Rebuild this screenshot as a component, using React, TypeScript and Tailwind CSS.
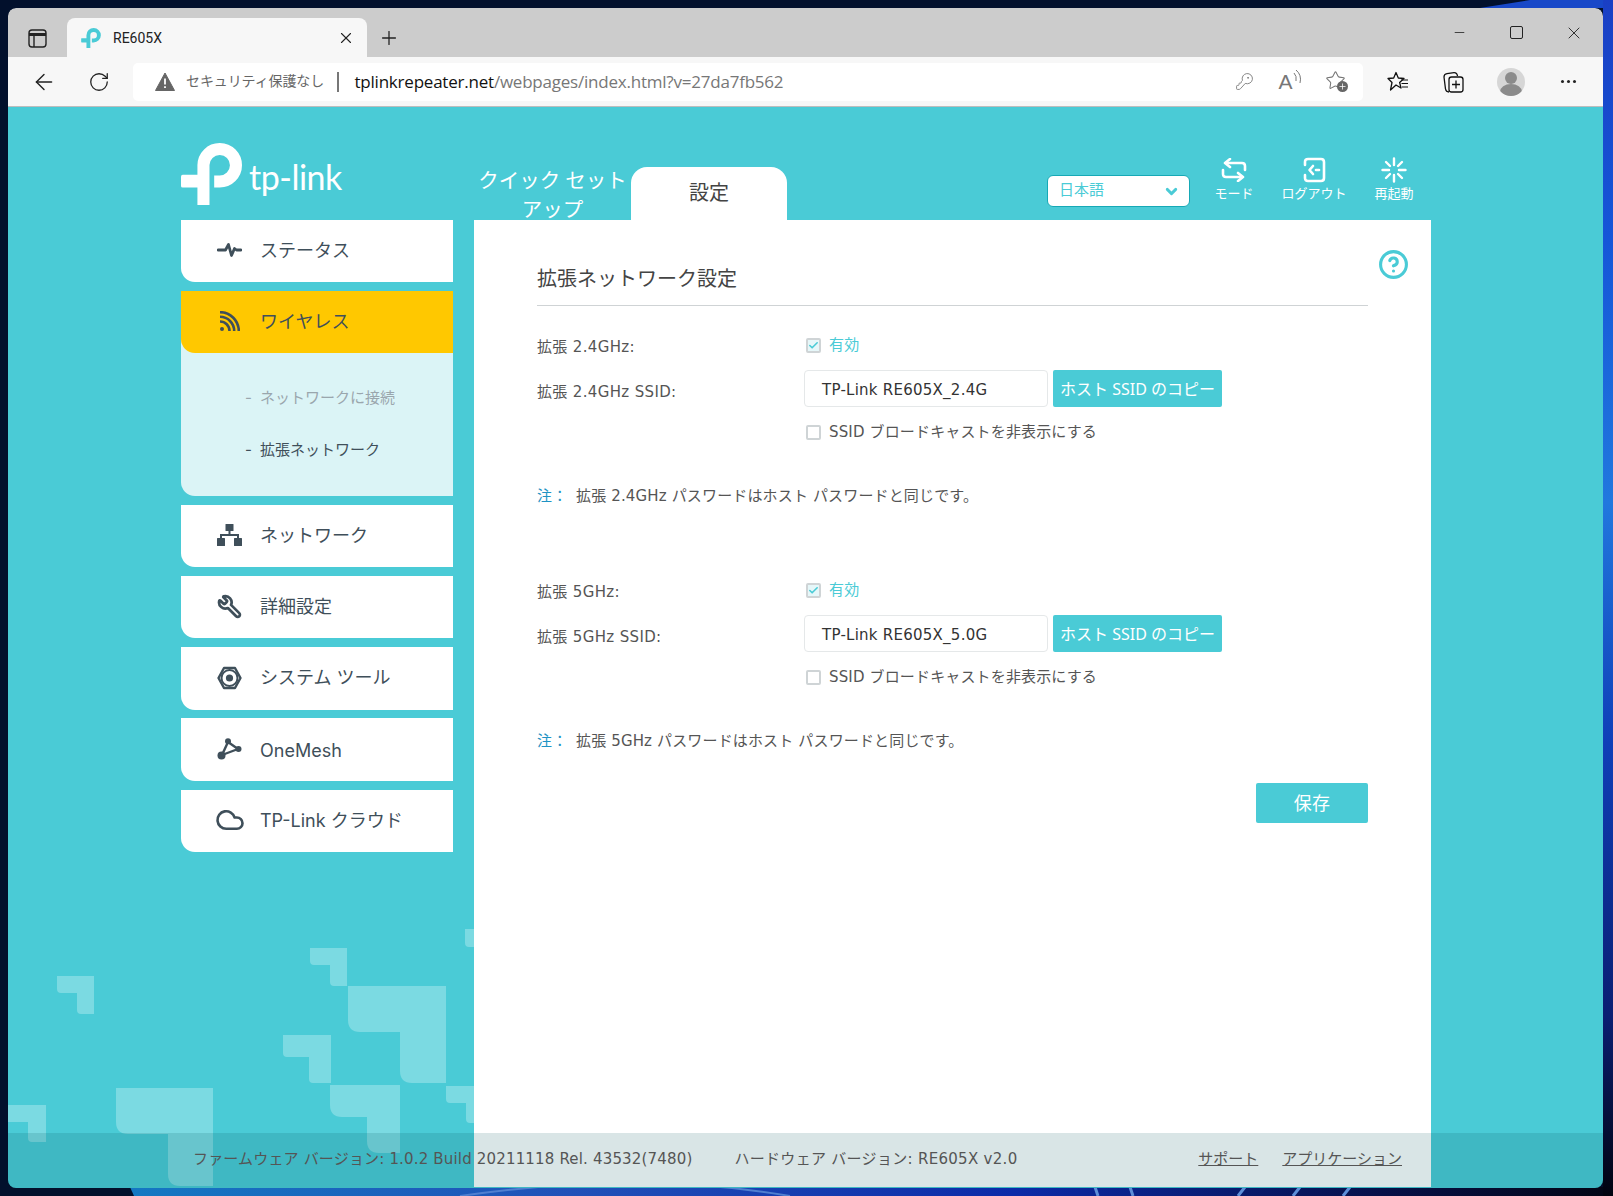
import React from "react";
import { CircleHelp, Check, Wrench, Cloud, KeyRound, Star, ArrowLeft, RotateCw, X, Plus, Minus, ChevronDown } from "lucide-react";

const ink = "#3f4f5a";

function Wallpaper() {
  return (
    <svg className="absolute inset-0" width="1613" height="1196" viewBox="0 0 1613 1196">
      <defs>
        <linearGradient id="wr" x1="0" y1="0" x2="0" y2="1">
          <stop offset="0" stopColor="#1a3fc4" />
          <stop offset="0.2" stopColor="#1556d8" />
          <stop offset="0.42" stopColor="#2178de" />
          <stop offset="0.62" stopColor="#0f3fb8" />
          <stop offset="0.85" stopColor="#0a1f72" />
          <stop offset="1" stopColor="#01030f" />
        </linearGradient>
        <linearGradient id="wb" x1="0" y1="0" x2="1" y2="0">
          <stop offset="0" stopColor="#1478c2" />
          <stop offset="0.3" stopColor="#2050b8" />
          <stop offset="0.6" stopColor="#0b2aa8" />
          <stop offset="0.85" stopColor="#061048" />
          <stop offset="1" stopColor="#020616" />
        </linearGradient>
      </defs>
      <rect width="1613" height="1196" fill="#02102c" />
      <path d="M1480 8 L1530 0 H1613 V8 Z" fill="#1848c8" />
      <rect x="1603" y="0" width="10" height="1196" fill="url(#wr)" />
      <path d="M130 1187 H1603 V1196 H134 Z" fill="url(#wb)" />
      <path d="M460 1196 Q640 1170 790 1196" fill="none" stroke="#4f7fd0" strokeWidth="2" />
      <path d="M1095 1187 L1098 1196 M1130 1187 L1133 1196 M1245 1187 L1238 1196 M1300 1187 L1293 1196 M1350 1187 L1343 1196" stroke="#5d8ed8" strokeWidth="3" />
    </svg>
  );
}

function Decor() {
  const c = "#7bdae2";
  const shapes: [number, number, number, number, number, number][] = [
    [57, 976, 94, 1014, 77, 993],
    [310, 948, 347, 986, 330, 965],
    [348, 986, 446, 1083, 400, 1032],
    [283, 1035, 331, 1083, 309, 1057],
    [330, 1085, 400, 1153, 367, 1117],
    [116, 1088, 213, 1186, 168, 1134],
    [-2, 1105, 46, 1142, 28, 1122],
    [446, 1086, 490, 1123, 466, 1103],
    [465, 929, 490, 947, 480, 947],
  ];
  return (
    <svg className="absolute left-0 top-0" width="1595" height="1080" viewBox="8 107 1595 1080">
      {shapes.map(([x1, y1, x2, y2, ix, iy], i) => {
        const r = (x2 - x1) > 60 ? 12 : 4;
        return (
          <path
            key={i}
            fill={c}
            d={`M${x1} ${y1} H${x2} V${y2} H${ix + r} Q${ix} ${y2} ${ix} ${y2 - r} V${iy} H${x1 + r} Q${x1} ${iy} ${x1} ${iy - r} Z`}
          />
        );
      })}
    </svg>
  );
}

function TpMark({ color, w, h }: { color: string; w: number; h: number }) {
  return (
    <svg width={w} height={h} viewBox="33 25 182 185" className="shrink-0">
      <path d="M100 210 V91 A48.5 48.5 0 1 1 148.5 140 H132" fill="none" stroke={color} strokeWidth="36" />
      <path d="M100 120 H38 Q33 120 33 125 V153 Q33 158 38 158 H100 Z" fill={color} />
    </svg>
  );
}

function TabStrip() {
  return (
    <div className="flex h-[49px] items-end bg-[#cccccc] rounded-t-[8px]">
      <div className="flex h-full w-[59px] items-center justify-center pt-[12px]">
        <svg width="19" height="19" viewBox="0 0 19 19" fill="none" stroke="#222" strokeWidth="1.4">
          <rect x="1" y="1" width="17" height="17" rx="3" />
          <path d="M1 5.5 H18" strokeWidth="3.2" />
          <path d="M6 5 V18" />
        </svg>
      </div>
      <div className="flex h-[39px] w-[300px] items-center rounded-t-[8px] bg-[#f7f7f7] pl-[14px] pr-[12px]">
        <TpMark color="#4acbd6" w={20} h={20} />
        <span className="ml-[12px] pt-[1px] text-[14px] text-[#222]">RE605X</span>
        <X size={18} strokeWidth={1.5} className="ml-auto text-[#222]" />
      </div>
      <div className="flex h-[39px] w-[44px] items-center justify-center">
        <Plus size={22} strokeWidth={1.4} className="text-[#222]" />
      </div>
      <div className="ml-auto flex h-full items-center">
        <div className="flex w-[57px] justify-center pl-[2px]"><Minus size={15} strokeWidth={1.3} className="text-[#222]" /></div>
        <div className="flex w-[58px] justify-center">
          <div className="h-[13px] w-[13px] rounded-[2px] border border-[#222]" />
        </div>
        <div className="flex w-[58px] justify-center"><X size={20} strokeWidth={1.1} className="text-[#222]" /></div>
      </div>
    </div>
  );
}

function Toolbar() {
  return (
    <div className="flex h-[50px] items-center border-b border-[#bdbdbd] bg-[#f7f7f7] pl-[8px]">
      <div className="flex w-[55px] justify-center"><ArrowLeft size={26} strokeWidth={1.3} className="text-[#222]" /></div>
      <div className="flex w-[55px] justify-center"><RotateCw size={22} strokeWidth={1.4} className="text-[#222]" /></div>
      <div className="ml-[7px] flex h-[38px] w-[1230px] items-center rounded-[5px] bg-white pl-[22px] pr-[5px]">
        <svg width="20" height="19" viewBox="0 0 20 19">
          <path d="M10 1 L19.5 18.5 H0.5 Z" fill="#666" stroke="#666" strokeLinejoin="round" />
          <path d="M10 6.5 V12.5 M10 14.2 V16" stroke="#fff" strokeWidth="1.8" />
        </svg>
        <span className="ml-[11px] w-[137px] whitespace-nowrap text-[14px] tracking-[-0.1px] text-[#666]">セキュリティ保護なし</span>
        <div className="ml-[14px] h-[20px] w-[1.5px] bg-[#777]" />
        <span className="ml-[16px] whitespace-nowrap font-['Open_Sans',sans-serif] text-[17px] tracking-[-0.22px] text-[#111]">
          tplinkrepeater.net<span className="text-[#777]">/webpages/index.html?v=27da7fb562</span>
        </span>
        <div className="ml-auto flex items-center text-[#777]">
          <div className="flex w-[45px] justify-center"><KeyRound size={19} strokeWidth={1.1} className="-scale-x-100 rotate-90" /></div>
          <div className="flex w-[46px] items-center justify-center">
            <span className="font-['Liberation_Sans',sans-serif] text-[21px] leading-none">A</span>
            <svg width="9" height="15" viewBox="0 0 9 15" fill="none" stroke="#777" className="-mt-[9px]"><path d="M1 3 Q4 6 3 11 M3 0 Q9 5 7 13" /></svg>
          </div>
          <div className="relative flex w-[45px] justify-center">
            <Star size={21} strokeWidth={1.2} className="-mt-[2px]" />
            <div className="absolute left-[24px] top-[9px] flex h-[11px] w-[11px] items-center justify-center rounded-full bg-[#666]"><Plus size={9} strokeWidth={2} className="text-white" /></div>
          </div>
        </div>
      </div>
      <div className="ml-[7px] flex w-[56px] justify-center">
        <svg width="22" height="21" viewBox="0 0 22 21" fill="none" stroke="#111" strokeWidth="1.3" strokeLinejoin="round">
          <path d="M9 1.5 L11.3 7 L17 7.5 L12.6 11.4 L14 17 L9 14 L3.5 19 L5 11.5 L1 7.5 L6.7 7 Z" />
          <path d="M14 9 H21 M14.5 12.5 H21 M15 16 H21" strokeWidth="1.2" />
        </svg>
      </div>
      <div className="flex w-[54px] justify-center">
        <svg width="21" height="22" viewBox="0 0 21 22" fill="none" stroke="#111" strokeWidth="1.3">
          <path d="M6 21 Q3 21 2.5 18 L1 6 Q1 3 4 2.6 L11 1.6 Q14 1.5 14.5 5" />
          <rect x="6" y="6" width="14" height="15" rx="2.5" fill="#f7f7f7" />
          <path d="M13 9.5 V17.5 M9 13.5 H17" />
        </svg>
      </div>
      <div className="flex w-[61px] justify-center">
        <svg width="28" height="28" viewBox="0 0 28 28">
          <defs><clipPath id="av"><circle cx="14" cy="14" r="14" /></clipPath></defs>
          <circle cx="14" cy="14" r="14" fill="#d6d6d6" />
          <g clipPath="url(#av)" fill="#8b8b8b">
            <circle cx="14" cy="10" r="6" />
            <ellipse cx="14" cy="24" rx="11" ry="8" />
          </g>
        </svg>
      </div>
      <div className="flex w-[54px] justify-center gap-[3px]">
        <span className="h-[3px] w-[3px] rounded-full bg-[#222]" />
        <span className="h-[3px] w-[3px] rounded-full bg-[#222]" />
        <span className="h-[3px] w-[3px] rounded-full bg-[#222]" />
      </div>
    </div>
  );
}

function TopAction({ label, children }: { label: string; children: React.ReactNode }) {
  return (
    <div className="flex w-[80px] flex-col items-center pt-[50px] text-white">
      <div className="flex h-[26px] items-center justify-center">{children}</div>
      <span className="mt-[1px] whitespace-nowrap text-[13px] leading-[20px]">{label}</span>
    </div>
  );
}

function Header() {
  return (
    <div className="flex h-[113px] items-start">
      <div className="flex w-[293px] items-center pt-[36px]">
        <TpMark color="#fff" w={61} h={62} />
        <span className="ml-[7px] mt-[5px] font-['Lato',sans-serif] text-[34px] leading-none tracking-[-0.5px] text-white">tp-link</span>
      </div>
      <div className="h-[113px] w-[157px] pt-[60px] text-center text-[20.5px] leading-[29px] text-white">
        <span className="block whitespace-nowrap">クイック セット</span>
        アップ
      </div>
      <div className="mt-[60px] flex h-[53px] w-[156px] items-center justify-center rounded-t-[16px] bg-white pb-[2px] text-[20px] text-[#444]">
        設定
      </div>
      <div className="ml-auto -mr-[3px] flex">
        <div className="mr-[4px] mt-[68px] flex h-[32px] w-[143px] items-center rounded-[6px] border border-[#16a9b6] bg-white pb-[1px] pl-[11px] pr-[9px] text-[15px] text-[#4acbd6]">
          日本語
          <ChevronDown size={17} strokeWidth={4} className="ml-auto mt-[2px] text-[#4acbd6]" />
        </div>
        <TopAction label="モード">
          <svg width="26" height="24" viewBox="0 0 26 24" fill="none" stroke="#fff" strokeWidth="2.6" strokeLinecap="round" strokeLinejoin="round">
            <path d="M7 5 H21 Q24 5 24 8 V12" />
            <path d="M9 1 L4 5 L9 9" />
            <path d="M19 19 H5 Q2 19 2 16 V12" />
            <path d="M17 15 L22 19 L17 23" />
          </svg>
        </TopAction>
        <TopAction label="ログアウト">
          <svg width="23" height="26" viewBox="0 0 23 26" fill="none" stroke="#fff" strokeWidth="2.6" strokeLinecap="round" strokeLinejoin="round">
            <path d="M2 8 V5 Q2 2 5 2 H18 Q21 2 21 5 V21 Q21 24 18 24 H5 Q2 24 2 21 V18" />
            <path d="M10 9 L6.5 13 L10 17" />
            <path d="M13 13 H16" />
          </svg>
        </TopAction>
        <TopAction label="再起動">
          <svg width="26" height="26" viewBox="0 0 26 26" fill="none" stroke="#fff" strokeWidth="2.4" strokeLinecap="round">
            <path d="M13 1.5 V8 M13 18 V24.5 M1.5 13 H8 M18 13 H24.5 M5 5 L9 9 M17 17 L21 21 M21 5 L17 9 M9 17 L5 21" />
          </svg>
        </TopAction>
      </div>
    </div>
  );
}

function NavRow({ icon, label, cls, textCls }: { icon: React.ReactNode; label: string; cls: string; textCls?: string }) {
  return (
    <div className={`flex items-center pb-[2px] pl-[36px] ${cls}`}>
      <div className="flex h-[26px] w-[25px] items-center justify-center">{icon}</div>
      <span className={`ml-[18px] whitespace-nowrap text-[18px] text-[#3f4f5a] ${textCls ?? ""}`}>{label}</span>
    </div>
  );
}

function Sidebar() {
  return (
    <div className="flex w-[272px] flex-col gap-[9px] font-['Inter','Noto_Sans_CJK_JP',sans-serif]">
      <NavRow
        cls="h-[62px] rounded-bl-[14px] bg-white"
        label="ステータス"
        icon={
          <svg width="25" height="16" viewBox="0 0 25 16" fill="none" stroke={ink} strokeWidth="2.8" strokeLinejoin="round" strokeLinecap="round">
            <path d="M1 8 H8.5 L11.5 2.5 L14.5 13.5 L17.5 6.5 L19.5 8 H24" />
          </svg>
        }
      />
      <div className="flex flex-col rounded-bl-[14px] bg-[#dbf4f6]">
        <NavRow
          cls="h-[62px] rounded-bl-[14px] bg-[#ffc800]"
          label="ワイヤレス"
          icon={
            <svg width="20" height="20" viewBox="0 0 20 20" fill="none" stroke={ink} strokeWidth="2.6">
              <circle cx="2" cy="18" r="2" fill={ink} stroke="none" />
              <path d="M0 10.5 A9.5 9.5 0 0 1 9.5 20" />
              <path d="M0 5.8 A14.2 14.2 0 0 1 14.2 20" />
              <path d="M0 1.2 A18.8 18.8 0 0 1 18.8 20" />
            </svg>
          }
        />
        <div className="flex h-[143px] flex-col pt-[20px] pl-[64px] text-[15px]">
          <div className="flex h-[51px] items-center text-[#9aa6ad]">
            <span className="w-[15px]">-</span>ネットワークに接続
          </div>
          <div className="flex h-[53px] items-center text-[#3f4f5a]">
            <span className="w-[15px]">-</span>拡張ネットワーク
          </div>
        </div>
      </div>
      <NavRow
        cls="h-[62px] rounded-bl-[14px] bg-white"
        label="ネットワーク"
        icon={
          <svg width="25" height="22" viewBox="0 0 25 22">
            <path d="M12.5 6 V11 M4 16 V11 H21 V16" fill="none" stroke={ink} strokeWidth="2" />
            <rect x="8.5" y="0" width="8" height="7" rx="0.5" fill={ink} />
            <rect x="0" y="14" width="8" height="8" rx="0.5" fill={ink} />
            <rect x="17" y="14" width="8" height="8" rx="0.5" fill={ink} />
          </svg>
        }
      />
      <NavRow
        cls="h-[62px] rounded-bl-[14px] bg-white"
        label="詳細設定"
        icon={<Wrench size={27} strokeWidth={2.6} className="-scale-x-100" style={{ color: ink }} />}
      />
      <NavRow
        cls="-mb-[1px] h-[63px] rounded-bl-[14px] bg-white"
        label="システム ツール"
        icon={
          <svg width="25" height="24" viewBox="0 0 25 24" fill="none" stroke={ink} strokeLinejoin="round">
            <path d="M7 2 H18 L23.5 12 L18 22 H7 L1.5 12 Z" strokeWidth="2.4" />
            <circle cx="12.5" cy="12" r="8" strokeWidth="2" />
            <circle cx="12.5" cy="12" r="3.6" fill={ink} stroke="none" />
          </svg>
        }
      />
      <NavRow
        cls="h-[63px] rounded-bl-[14px] bg-white"
        label="OneMesh"
        textCls="pt-[4px]"
        icon={
          <svg width="25" height="22" viewBox="0 0 25 22" fill={ink} stroke={ink}>
            <path d="M11 4 L5 17 L21 11 Z" fill="none" strokeWidth="2.4" strokeLinejoin="round" />
            <circle cx="11" cy="3.2" r="3" stroke="none" />
            <circle cx="21.5" cy="11" r="3" stroke="none" />
            <circle cx="4.5" cy="17.5" r="4" stroke="none" />
          </svg>
        }
      />
      <NavRow
        cls="h-[62px] rounded-bl-[14px] bg-white"
        label="TP-Link クラウド"
        icon={<Cloud size={30} strokeWidth={2.1} className="-mt-[1px] shrink-0" style={{ color: ink }} />}
      />
    </div>
  );
}

function Box({ checked }: { checked?: boolean }) {
  return (
    <div className={`flex h-[15px] w-[15px] items-center justify-center rounded-[2px] border-2 border-[#cfd4d6] ${checked ? "bg-[#e6f7f9]" : "bg-white"}`}>
      {checked && <Check size={11} strokeWidth={3.5} className="text-[#4acbd6]" />}
    </div>
  );
}

function Band({ band, ssid, first }: { band: string; ssid: string; first?: boolean }) {
  return (
    <div className={first ? "mt-[28px]" : "mt-[72px]"}>
      <div className="flex h-[24px] items-center">
        <span className="w-[267px] pt-[2px] tracking-[0.35px]">拡張 {band}:</span>
        <div className="ml-[2px] -mt-[1px] flex items-center">
          <Box checked />
          <span className="ml-[8px] text-[#4acbd6]">有効</span>
        </div>
      </div>
      <div className="mt-[12px] flex h-[37px] items-center">
        <span className="w-[267px] pt-[8px] tracking-[0.35px]">拡張 {band} SSID:</span>
        <div className="flex h-[37px] w-[244px] items-center rounded-[4px] border border-[#e5e8e9] pl-[17px] pt-[3px] text-[15px] tracking-[0.25px] text-[#333]">{ssid}</div>
        <div className="ml-[5px] flex h-[37px] w-[169px] items-center justify-center whitespace-nowrap rounded-[2px] bg-[#4acbd6] font-['Noto_Sans','Noto_Sans_CJK_JP',sans-serif] text-[16px] tracking-normal text-white">ホスト SSID のコピー</div>
      </div>
      <div className="mt-[13px] flex h-[24px] items-center pl-[269px]">
        <Box />
        <span className="ml-[8px]">SSID ブロードキャストを非表示にする</span>
      </div>
      <div className="mt-[39px] flex h-[24px] items-center pt-[3px]">
        <span className="w-[39px] text-[#1f93c4]">注：</span>
        拡張 {band} パスワードはホスト パスワードと同じです。
      </div>
    </div>
  );
}

function Content() {
  return (
    <div className="relative h-[967px] w-[957px] bg-white px-[63px] font-['DejaVu_Sans','Noto_Sans_CJK_JP',sans-serif] text-[15px] tracking-[0.15px] text-[#555]">
      <CircleHelp size={31} strokeWidth={2.4} className="absolute left-[904px] top-[29px] text-[#4acbd6]" />
      <div className="flex h-[86px] items-end border-b border-[#cfd3d5] pb-[12px] text-[20px] leading-[28px] tracking-normal text-[#444]">拡張ネットワーク設定</div>
      <Band first band="2.4GHz" ssid="TP-Link RE605X_2.4G" />
      <Band band="5GHz" ssid="TP-Link RE605X_5.0G" />
      <div className="mt-[31px] flex justify-end">
        <div className="flex h-[40px] w-[112px] items-center justify-center rounded-[2px] bg-[#4acbd6] text-[18px] text-white">保存</div>
      </div>
    </div>
  );
}

function Footer() {
  return (
    <div className="absolute bottom-0 left-0 right-0 flex h-[55px] items-center bg-[rgba(0,81,88,0.15)] pb-[2px] pl-[185px] pr-[201px] font-['DejaVu_Sans','Noto_Sans_CJK_JP',sans-serif] text-[15px] tracking-[0.17px] text-[#555]">
      <span>ファームウェア バージョン: 1.0.2 Build 20211118 Rel. 43532(7480)</span>
      <span className="ml-[42px] tracking-[0.3px]">ハードウェア バージョン: RE605X v2.0</span>
      <div className="ml-auto flex gap-[24px] tracking-normal">
        <span className="underline">サポート</span>
        <span className="underline">アプリケーション</span>
      </div>
    </div>
  );
}

export default function App() {
  return (
    <div className="relative h-[1196px] w-[1613px] overflow-hidden bg-[#02102c] pl-[8px] pt-[8px] font-['Roboto','Noto_Sans_CJK_JP',sans-serif]">
      <Wallpaper />
      <div className="relative flex h-[1180px] w-[1595px] flex-col overflow-hidden rounded-[8px]">
        <TabStrip />
        <Toolbar />
        <div className="relative flex-1 overflow-hidden bg-[#4acbd6]">
          <Decor />
          <div className="relative ml-[173px] w-[1250px]">
            <Header />
            <div className="flex items-start gap-[21px]">
              <Sidebar />
              <Content />
            </div>
          </div>
          <Footer />
        </div>
      </div>
    </div>
  );
}
